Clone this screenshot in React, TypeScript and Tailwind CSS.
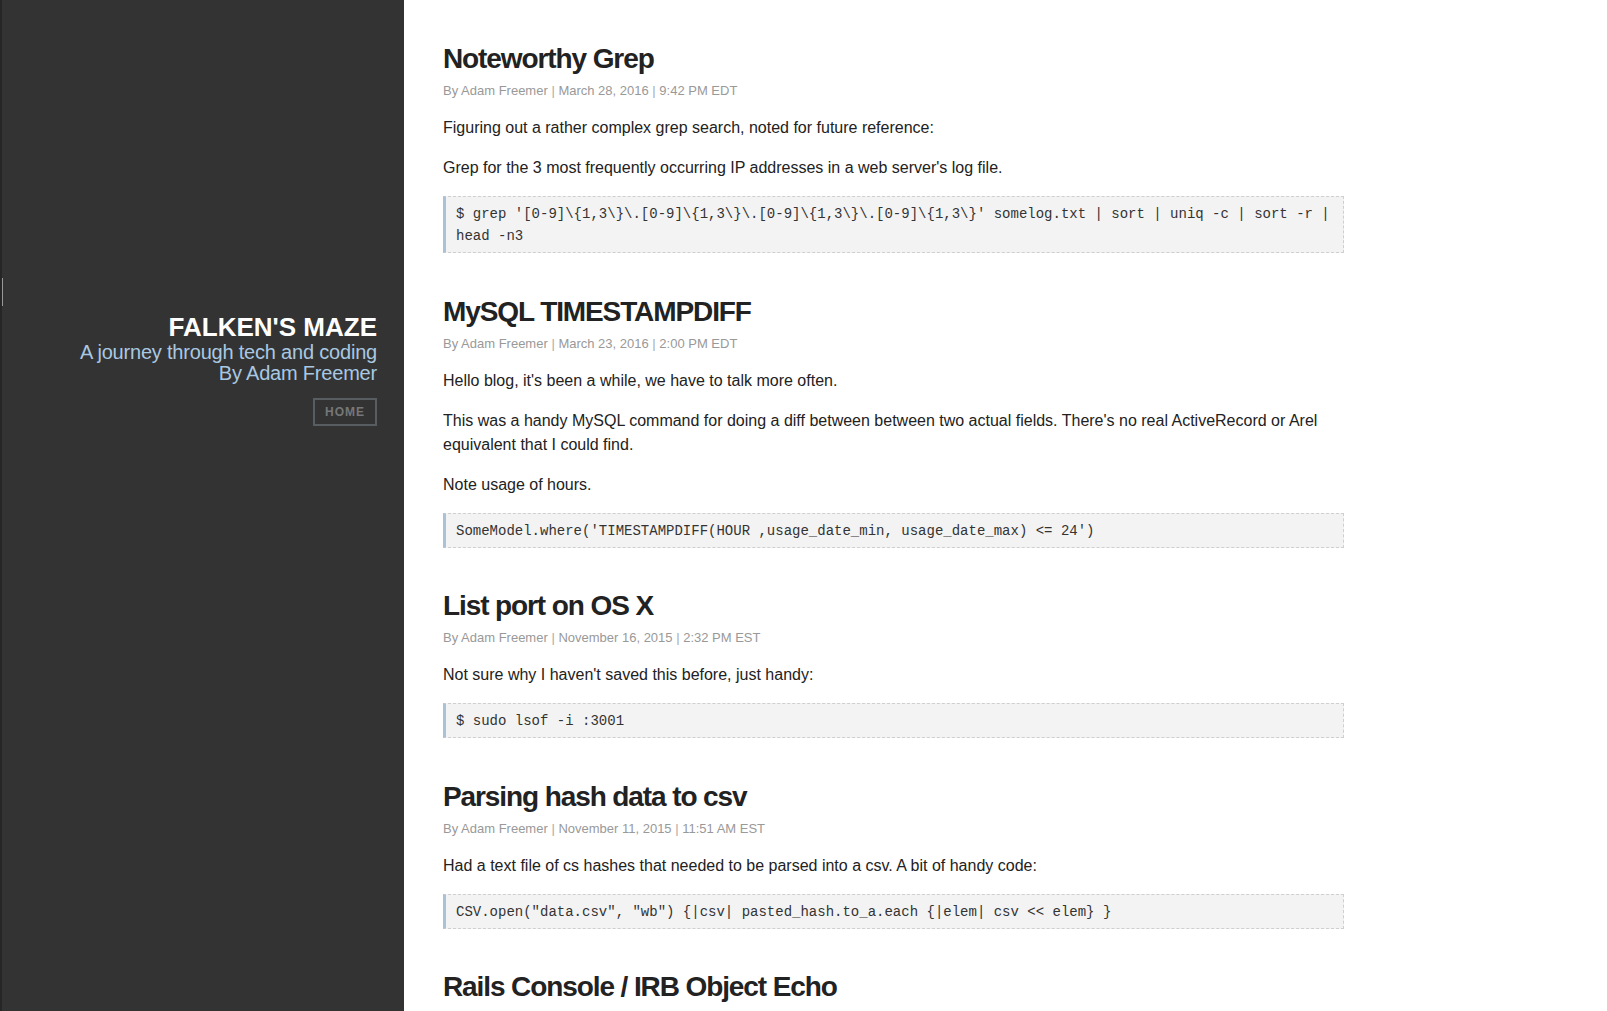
const posts = [
  {
    title: "Noteworthy Grep",
    meta: ["By Adam Freemer", "March 28, 2016", "9:42 PM EDT"],
    body: [
      "Figuring out a rather complex grep search, noted for future reference:",
      "Grep for the 3 most frequently occurring IP addresses in a web server's log file.",
    ],
    code: "$ grep '[0-9]\\{1,3\\}\\.[0-9]\\{1,3\\}\\.[0-9]\\{1,3\\}\\.[0-9]\\{1,3\\}' somelog.txt | sort | uniq -c | sort -r |\nhead -n3",
  },
  {
    title: "MySQL TIMESTAMPDIFF",
    meta: ["By Adam Freemer", "March 23, 2016", "2:00 PM EDT"],
    body: [
      "Hello blog, it's been a while, we have to talk more often.",
      "This was a handy MySQL command for doing a diff between between two actual fields. There's no real ActiveRecord or Arel equivalent that I could find.",
      "Note usage of hours.",
    ],
    code: "SomeModel.where('TIMESTAMPDIFF(HOUR ,usage_date_min, usage_date_max) <= 24')",
  },
  {
    title: "List port on OS X",
    meta: ["By Adam Freemer", "November 16, 2015", "2:32 PM EST"],
    body: ["Not sure why I haven't saved this before, just handy:"],
    code: "$ sudo lsof -i :3001",
  },
  {
    title: "Parsing hash data to csv",
    meta: ["By Adam Freemer", "November 11, 2015", "11:51 AM EST"],
    body: ["Had a text file of cs hashes that needed to be parsed into a csv. A bit of handy code:"],
    code: 'CSV.open("data.csv", "wb") {|csv| pasted_hash.to_a.each {|elem| csv << elem} }',
  },
  {
    // only the heading is in view at the bottom of the page
    title: "Rails Console / IRB Object Echo",
    meta: [] as string[],
    body: [] as string[],
    code: "",
  },
];

function Post({ post }: { post: (typeof posts)[number] }) {
  return (
    <article>
      <h2 className="text-[28px] leading-[32px] font-bold tracking-[-1.1px] text-[#222]">{post.title}</h2>
      {post.meta.length > 0 && (
        <p className="mt-[7px] text-[13px] leading-[18px] text-[#999]">
          {post.meta.map((m, i) => (
            <span key={i}>
              {i > 0 && <span className="text-[#aaa] font-light"> | </span>}
              {m}
            </span>
          ))}
        </p>
      )}
      {post.body.map((p, i) => (
        <p key={i} className="mt-4 text-base leading-6 text-[#222]">
          {p}
        </p>
      ))}
      {post.code && (
        <pre className="mt-4 border border-dashed border-[#cfcfcf] border-l-[3px] [border-left-style:solid] border-l-[#a9c2d8] bg-[#f3f3f3] pl-[10px] pr-2 pt-[6px] pb-[5px] font-['Liberation_Mono',monospace] text-[14px] leading-[22px] text-[#333] whitespace-pre">
          {post.code}
        </pre>
      )}
    </article>
  );
}

export default function App() {
  return (
    <div className="flex h-[1011px] overflow-hidden bg-white font-['Liberation_Sans',Arial,sans-serif]">
      {/* Sidebar */}
      <aside className="relative w-[404px] shrink-0 bg-[#333] border-l-2 border-[#262626]">
        <div className="absolute left-0 top-[278px] h-[28px] w-px bg-[#999]" />
        <div className="flex flex-col items-end pt-[313px] pr-[27px] text-right">
          <h1 className="text-[26px] leading-[28px] font-bold text-white">FALKEN'S MAZE</h1>
          <p className="mt-[1px] text-[20px] leading-[20.5px] tracking-[-0.2px] text-[#a9c8e2]">
            A journey through tech and coding
            <br />
            By Adam Freemer
          </p>
          <a className="mt-[15px] flex h-[28px] w-[64px] items-center justify-center border-2 border-[#585d62] text-[12px] font-bold tracking-[1px] text-[#777]">
            HOME
          </a>
        </div>
      </aside>

      {/* Posts */}
      <main className="pl-[39px] pt-[43px]">
        <div className="flex w-[901px] flex-col gap-[42.5px]">
          {posts.map((post) => (
            <Post key={post.title} post={post} />
          ))}
        </div>
      </main>
    </div>
  );
}
